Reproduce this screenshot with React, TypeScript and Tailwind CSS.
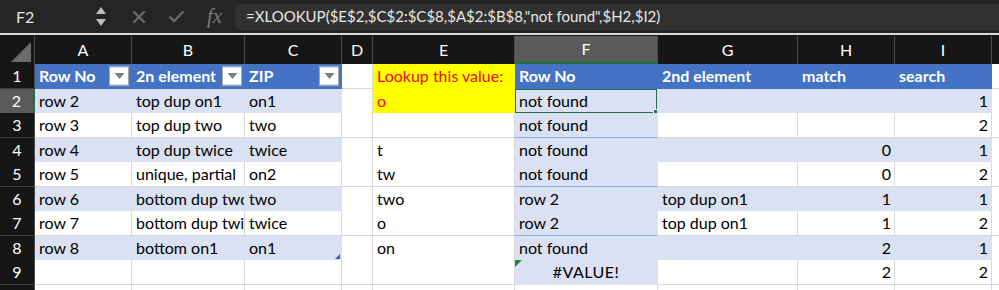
import React from "react";

type Kind = "white" | "band" | "head" | "yellow" | "spill" | "spillLast";

interface CellDef {
  t?: string;
  k: Kind;
  align?: "l" | "r" | "c";
  filter?: boolean;
  tableEdge?: boolean;
}

const kindClass: Record<Kind, string> = {
  white: "bg-white border-r border-b border-r-[#d9d9d9] border-b-[#d9d9d9] text-black",
  band: "bg-[#d9e1f2] border-r border-b border-r-[#d9e1f2] border-b-[#8ea9db] text-black",
  head: "bg-[#4472c4] border-r border-b border-r-[#4472c4] border-b-[#4472c4] text-white font-bold",
  yellow: "bg-[#ffff00] border-r border-b border-[#ffff00] text-[#ff0000]",
  spill: "bg-[#d9e1f2] border-r border-b border-r-[#d9e1f2] border-b-[#8ea9db] text-black",
  spillLast: "bg-[#d9e1f2] border-r border-b border-r-[#d9e1f2] border-b-[#d9e1f2] text-black",
};

const w = (t?: string, align?: "l" | "r" | "c"): CellDef => ({ t, k: "white", align });
const b = (t?: string, align?: "l" | "r" | "c"): CellDef => ({ t, k: "band", align });

const rows: CellDef[][] = [
  [
    { t: "Row No", k: "head", filter: true },
    { t: "2n element", k: "head", filter: true },
    { t: "ZIP", k: "head", filter: true, tableEdge: true },
    w(),
    { t: "Lookup this value:", k: "yellow" },
    { t: "Row No", k: "head" },
    { t: "2nd element", k: "head" },
    { t: "match", k: "head" },
    { t: "search", k: "head" },
  ],
  [b("row 2"), b("top dup on1"), { ...b("on1"), tableEdge: true }, w(), { t: "o", k: "yellow" }, { t: "not found", k: "spill" }, b(), b(), b("1", "r")],
  [w("row 3"), w("top dup two"), { ...w("two"), tableEdge: true }, w(), w(), { t: "not found", k: "spill" }, w(), w(), w("2", "r")],
  [b("row 4"), b("top dup twice"), { ...b("twice"), tableEdge: true }, w(), w("t"), { t: "not found", k: "spill" }, b(), b("0", "r"), b("1", "r")],
  [w("row 5"), w("unique, partial"), { ...w("on2"), tableEdge: true }, w(), w("tw"), { t: "not found", k: "spill" }, w(), w("0", "r"), w("2", "r")],
  [b("row 6"), b("bottom dup two"), { ...b("two"), tableEdge: true }, w(), w("two"), { t: "row 2", k: "spill" }, b("top dup on1"), b("1", "r"), b("1", "r")],
  [w("row 7"), w("bottom dup twice"), { ...w("twice"), tableEdge: true }, w(), w("o"), { t: "row 2", k: "spill" }, w("top dup on1"), w("1", "r"), w("2", "r")],
  [b("row 8"), b("bottom on1"), { ...b("on1"), tableEdge: true }, w(), w("on"), { t: "not found", k: "spill" }, b(), b("2", "r"), b("1", "r")],
  [w(), w(), w(), w(), w(), { t: "#VALUE!", k: "spillLast", align: "c" }, w(), w("2", "r"), w("2", "r")],
];

const rowHeights = [25, 24, 25, 24, 25, 24, 25, 24, 25];
const colLetters = ["A", "B", "C", "D", "E", "F", "G", "H", "I"];
const gridCols = "grid grid-cols-[35px_97px_113px_97px_31px_142px_143px_140px_97px_97px_1fr]";

function FilterButton() {
  return (
    <span className="absolute right-[2px] top-1/2 -translate-y-1/2 w-[20px] h-[19px] bg-white border border-[#a6a6a6] flex items-center justify-center">
      <svg width="11" height="7" viewBox="0 0 11 7">
        <path d="M0.5 0.5 L10.5 0.5 L5.5 6.5 Z" fill="#7f7f7f" />
      </svg>
    </span>
  );
}

function Cell({ c, r, ci }: { c: CellDef; r: number; ci: number }) {
  const align =
    c.align === "r" ? "justify-end pr-[3px]" : c.align === "c" ? "justify-center" : "justify-start pl-[4px]";
  const edge = c.tableEdge ? "border-r-[#8ea9db]" : "";
  const selected = r === 1 && ci === 5;
  return (
    <div
      className={`relative flex items-center overflow-hidden whitespace-nowrap ${kindClass[c.k]} ${edge} ${align}`}
    >
      <span className={c.align === "c" ? "tracking-[0.5px]" : ""}>{c.t}</span>
      {c.filter && <FilterButton />}
      {selected && (
        <>
          <span className="absolute left-[-1px] top-[-1px] right-[-1px] bottom-[-1px] border-2 border-[#1f7244]" />
          <span className="absolute right-[-3px] bottom-[-3px] w-[7px] h-[7px] bg-[#1f7244] border border-white" />
        </>
      )}
      {c.k === "spillLast" && (
        <span className="absolute left-0 top-0 w-0 h-0 border-t-[7px] border-r-[7px] border-t-[#1b8a2f] border-r-transparent" />
      )}
      {r === 7 && ci === 2 && (
        <span className="absolute right-[1px] bottom-[1px] w-0 h-0 border-b-[5px] border-l-[5px] border-b-[#3a5fb0] border-l-transparent" />
      )}
    </div>
  );
}

export default function App() {
  return (
    <div
      className="w-[999px] h-[290px] overflow-hidden bg-white text-[16px]"
      style={{ fontFamily: "Lato, 'Liberation Sans', sans-serif" }}
    >
      {/* formula bar */}
      <div className="h-[33px] bg-[#252525] flex items-center">
        <div className="w-[112px] h-full flex items-center justify-between pl-[16px] pr-[6px] text-[#e6e6e6]">
          <span>F2</span>
          <div className="flex flex-col items-center gap-[5px]">
            <svg width="10" height="7" viewBox="0 0 10 7">
              <path d="M5 0 L10 7 L0 7 Z" fill="#bdbdbd" />
            </svg>
            <svg width="10" height="7" viewBox="0 0 10 7">
              <path d="M0 0 L10 0 L5 7 Z" fill="#bdbdbd" />
            </svg>
          </div>
        </div>
        <div className="w-[123px] h-full flex items-center gap-[22px] pl-[20px]">
          <svg width="14" height="14" viewBox="0 0 14 14">
            <path d="M1.5 1.5 L12.5 12.5 M12.5 1.5 L1.5 12.5" stroke="#6a6a6a" strokeWidth="2.4" />
          </svg>
          <svg width="17" height="13" viewBox="0 0 17 13">
            <path d="M1.5 6.5 L6 11 L15.5 1.5" stroke="#6a6a6a" strokeWidth="2.4" fill="none" />
          </svg>
          <span
            className="text-[#7a7a7a] italic text-[21px] leading-none"
            style={{ fontFamily: "'Liberation Serif', serif" }}
          >
            fx
          </span>
        </div>
        <div className="flex-1 h-[26px] bg-[#313131] rounded-l-[5px] flex items-center pl-[11px] text-[#e8e8e8] text-[15px]">
          =XLOOKUP($E$2,$C$2:$C$8,$A$2:$B$8,"not found",$H2,$I2)
        </div>
      </div>
      <div className="h-[3px] border-t-2 border-[#d6d6d6] bg-[#1a1a1a]" />

      {/* column headers */}
      <div className={`${gridCols} h-[28px] bg-[#161616] text-white`}>
        <div className="relative border-r border-[#4a4a4a]">
          <svg className="absolute right-[3px] bottom-[2px]" width="20" height="20" viewBox="0 0 20 20">
            <path d="M20 0 L20 20 L0 20 Z" fill="#6b6b6b" />
          </svg>
        </div>
        {colLetters.map((l) => (
          <div
            key={l}
            className={`flex items-center justify-center border-r border-[#4a4a4a] ${
              l === "F" ? "bg-[#5a5a5a] border-b-2 border-b-[#1f7244]" : ""
            }`}
          >
            {l}
          </div>
        ))}
        <div />
      </div>

      {/* rows */}
      {rows.map((row, r) => (
        <div key={r} className={gridCols} style={{ height: rowHeights[r] }}>
          <div
            className={`flex items-center justify-center text-white border-b border-[#3c3c3c] ${
              r === 1 ? "bg-[#5a5a5a] border-r-2 border-r-[#1f7244]" : "bg-[#161616] border-r border-r-[#4a4a4a]"
            }`}
          >
            {r + 1}
          </div>
          {row.map((c, ci) => (
            <Cell key={ci} c={c} r={r} ci={ci} />
          ))}
          <div className="bg-white border-b border-[#d9d9d9]" />
        </div>
      ))}
      <div className={`${gridCols} h-[10px]`}>
        <div className="bg-[#161616] border-r border-[#4a4a4a]" />
        {colLetters.map((l) => (
          <div key={l} className="border-r border-[#d9d9d9]" />
        ))}
      </div>
    </div>
  );
}
